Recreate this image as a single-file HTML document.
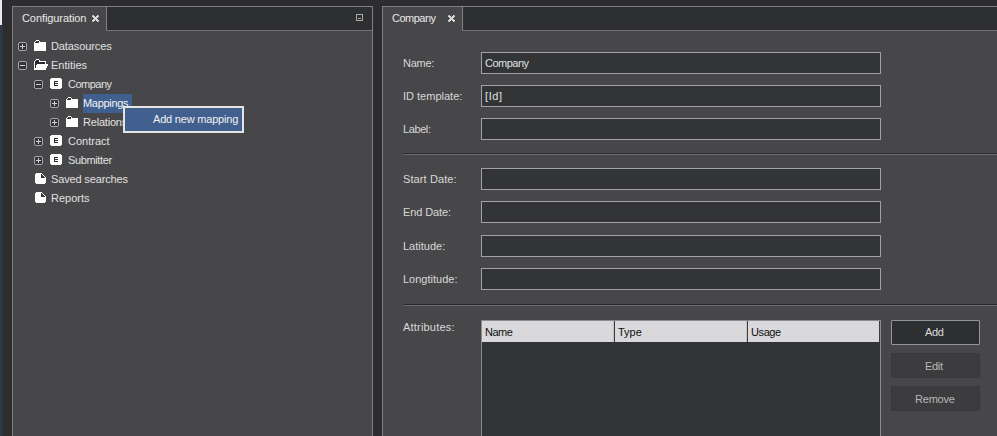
<!DOCTYPE html>
<html><head><meta charset="utf-8">
<style>
*{margin:0;padding:0;box-sizing:border-box}
html,body{width:997px;height:436px;overflow:hidden;background:#2d2d2f}
body{position:relative;font-family:"Liberation Sans",sans-serif;font-size:11px}
.a{position:absolute}
.t{position:absolute;line-height:13px;white-space:nowrap}
svg{position:absolute;display:block;shape-rendering:crispEdges}
</style></head><body>


<div class="a" style="left:0px;top:0px;width:2px;height:25px;background:#ebebeb;"></div>
<div class="a" style="left:0px;top:25px;width:2px;height:411px;background:#2a3848;"></div>
<div class="a" style="left:2px;top:25px;width:1px;height:411px;background:#363436;"></div>
<div class="a" style="left:12px;top:6px;width:361px;height:440px;background:#474749;border:1px solid #808082"></div>
<div class="a" style="left:13px;top:7px;width:359px;height:23px;background:#2e2f31;"></div>
<div class="a" style="left:13px;top:30px;width:359px;height:1px;background:#727274;"></div>
<div class="a" style="left:13px;top:7px;width:93px;height:24px;background:#474749;"></div>
<div class="a" style="left:106px;top:7px;width:1px;height:23px;background:#828284;"></div>
<div class="t" style="left:22px;top:12px;color:#e8e8e8;letter-spacing:-0.08px;">Configuration</div>
<svg style="left:92px;top:15px" width="7" height="7"><path d="M1 0h1v1h-1zM5 0h1v1h-1zM0 1h3v1h-3zM4 1h3v1h-3zM1 2h5v1h-5zM2 3h3v1h-3zM1 4h5v1h-5zM0 5h3v1h-3zM4 5h3v1h-3zM1 6h1v1h-1zM5 6h1v1h-1z" fill="#d8d8d8"/><path d="M0 0h1v1h-1zM6 0h1v1h-1zM0 6h1v1h-1zM6 6h1v1h-1z" fill="#9a9a9c"/></svg>
<svg style="left:356px;top:14px" width="7" height="7" viewBox="0 0 7 7"><rect x="0.5" y="0.5" width="6" height="6" fill="none" stroke="#a8a8a8"/><rect x="2" y="4" width="3" height="1" fill="#a8a8a8"/></svg>
<svg style="left:18px;top:42px" width="9" height="9"><path d="M1 0h7v1h1v7h-1v1H1v-1H0V1h1z" fill="#a6a6a6"/><rect x="1" y="1" width="7" height="7" fill="#353537"/><path d="M2 4h5v1H2zM4 2h1v5H4z" fill="#d0d0d0"/></svg>
<svg style="left:34px;top:40px" width="12" height="11"><path d="M2 0h3v1h-3zM1 1h1v1h-1zM5 1h1v1h-1zM0 2h1v1h-1zM5 2h7v1h-7zM0 3h12v1h-12zM0 4h12v1h-12zM0 5h12v1h-12zM0 6h12v1h-12zM0 7h12v1h-12zM0 8h12v1h-12zM0 9h12v1h-12zM0 10h12v1h-12z" fill="#fff"/><path d="M2 1h3v1h-3zM1 2h4v1h-4z" fill="#343436"/></svg>
<div class="t" style="left:51px;top:40px;color:#e0e0e0;letter-spacing:-0.1px;">Datasources</div>
<svg style="left:18px;top:61px" width="9" height="9"><path d="M1 0h7v1h1v7h-1v1H1v-1H0V1h1z" fill="#a6a6a6"/><rect x="1" y="1" width="7" height="7" fill="#353537"/><path d="M2 4h5v1H2z" fill="#d0d0d0"/></svg>
<svg style="left:34px;top:59px" width="14" height="11"><path d="M2 0h3v1h-3zM1 1h1v1h-1zM5 1h1v1h-1zM0 2h1v1h-1zM5 2h7v1h-7zM0 3h1v1h-1zM11 3h1v1h-1zM0 4h1v1h-1zM11 4h1v1h-1zM0 5h1v1h-1zM3 5h11v1h-11zM0 6h1v1h-1zM2 6h12v1h-12zM0 7h1v1h-1zM2 7h11v1h-11zM0 8h1v1h-1zM2 8h11v1h-11zM0 9h12v1h-12zM0 10h12v1h-12z" fill="#fff"/><path d="M2 1h3v1h-3zM1 2h4v1h-4zM1 3h10v1h-10zM1 4h10v1h-10zM1 5h2v1h-2zM1 6h1v1h-1zM1 7h1v1h-1zM1 8h1v1h-1z" fill="#2c2c2e"/></svg>
<div class="t" style="left:51px;top:59px;color:#e0e0e0;">Entities</div>
<svg style="left:34px;top:80px" width="9" height="9"><path d="M1 0h7v1h1v7h-1v1H1v-1H0V1h1z" fill="#a6a6a6"/><rect x="1" y="1" width="7" height="7" fill="#353537"/><path d="M2 4h5v1H2z" fill="#d0d0d0"/></svg>
<svg style="left:50px;top:78px" width="12" height="11"><path d="M1 0h10v1h-10zM0 1h12v1h-12zM0 2h12v1h-12zM0 3h4v1h-4zM8 3h4v1h-4zM0 4h4v1h-4zM5 4h7v1h-7zM0 5h4v1h-4zM8 5h4v1h-4zM0 6h4v1h-4zM5 6h7v1h-7zM0 7h4v1h-4zM8 7h4v1h-4zM0 8h12v1h-12zM0 9h12v1h-12zM1 10h10v1h-10z" fill="#fff"/><path d="M4 3h4v1h-4zM4 4h1v1h-1zM4 5h4v1h-4zM4 6h1v1h-1zM4 7h4v1h-4z" fill="#2e2e30"/></svg>
<div class="t" style="left:68px;top:78px;color:#e0e0e0;letter-spacing:-0.5px;">Company</div>
<div class="a" style="left:83px;top:94px;width:49px;height:19px;background:#3f5f8e;"></div>
<svg style="left:50px;top:99px" width="9" height="9"><path d="M1 0h7v1h1v7h-1v1H1v-1H0V1h1z" fill="#a6a6a6"/><rect x="1" y="1" width="7" height="7" fill="#353537"/><path d="M2 4h5v1H2zM4 2h1v5H4z" fill="#d0d0d0"/></svg>
<svg style="left:66px;top:97px" width="12" height="11"><path d="M2 0h3v1h-3zM1 1h1v1h-1zM5 1h1v1h-1zM0 2h1v1h-1zM5 2h7v1h-7zM0 3h12v1h-12zM0 4h12v1h-12zM0 5h12v1h-12zM0 6h12v1h-12zM0 7h12v1h-12zM0 8h12v1h-12zM0 9h12v1h-12zM0 10h12v1h-12z" fill="#fff"/><path d="M2 1h3v1h-3zM1 2h4v1h-4z" fill="#343436"/></svg>
<div class="t" style="left:83px;top:97px;color:#f4f4f4;letter-spacing:-0.3px;">Mappings</div>
<svg style="left:50px;top:118px" width="9" height="9"><path d="M1 0h7v1h1v7h-1v1H1v-1H0V1h1z" fill="#a6a6a6"/><rect x="1" y="1" width="7" height="7" fill="#353537"/><path d="M2 4h5v1H2zM4 2h1v5H4z" fill="#d0d0d0"/></svg>
<svg style="left:66px;top:116px" width="12" height="11"><path d="M2 0h3v1h-3zM1 1h1v1h-1zM5 1h1v1h-1zM0 2h1v1h-1zM5 2h7v1h-7zM0 3h12v1h-12zM0 4h12v1h-12zM0 5h12v1h-12zM0 6h12v1h-12zM0 7h12v1h-12zM0 8h12v1h-12zM0 9h12v1h-12zM0 10h12v1h-12z" fill="#fff"/><path d="M2 1h3v1h-3zM1 2h4v1h-4z" fill="#343436"/></svg>
<div class="t" style="left:83px;top:116px;color:#e0e0e0;letter-spacing:-0.2px;">Relations</div>
<svg style="left:34px;top:137px" width="9" height="9"><path d="M1 0h7v1h1v7h-1v1H1v-1H0V1h1z" fill="#a6a6a6"/><rect x="1" y="1" width="7" height="7" fill="#353537"/><path d="M2 4h5v1H2zM4 2h1v5H4z" fill="#d0d0d0"/></svg>
<svg style="left:50px;top:135px" width="12" height="11"><path d="M1 0h10v1h-10zM0 1h12v1h-12zM0 2h12v1h-12zM0 3h4v1h-4zM8 3h4v1h-4zM0 4h4v1h-4zM5 4h7v1h-7zM0 5h4v1h-4zM8 5h4v1h-4zM0 6h4v1h-4zM5 6h7v1h-7zM0 7h4v1h-4zM8 7h4v1h-4zM0 8h12v1h-12zM0 9h12v1h-12zM1 10h10v1h-10z" fill="#fff"/><path d="M4 3h4v1h-4zM4 4h1v1h-1zM4 5h4v1h-4zM4 6h1v1h-1zM4 7h4v1h-4z" fill="#2e2e30"/></svg>
<div class="t" style="left:68px;top:135px;color:#e0e0e0;">Contract</div>
<svg style="left:34px;top:156px" width="9" height="9"><path d="M1 0h7v1h1v7h-1v1H1v-1H0V1h1z" fill="#a6a6a6"/><rect x="1" y="1" width="7" height="7" fill="#353537"/><path d="M2 4h5v1H2zM4 2h1v5H4z" fill="#d0d0d0"/></svg>
<svg style="left:50px;top:154px" width="12" height="11"><path d="M1 0h10v1h-10zM0 1h12v1h-12zM0 2h12v1h-12zM0 3h4v1h-4zM8 3h4v1h-4zM0 4h4v1h-4zM5 4h7v1h-7zM0 5h4v1h-4zM8 5h4v1h-4zM0 6h4v1h-4zM5 6h7v1h-7zM0 7h4v1h-4zM8 7h4v1h-4zM0 8h12v1h-12zM0 9h12v1h-12zM1 10h10v1h-10z" fill="#fff"/><path d="M4 3h4v1h-4zM4 4h1v1h-1zM4 5h4v1h-4zM4 6h1v1h-1zM4 7h4v1h-4z" fill="#2e2e30"/></svg>
<div class="t" style="left:68px;top:154px;color:#e0e0e0;letter-spacing:-0.37px;">Submitter</div>
<svg style="left:35px;top:173px" width="11" height="11"><path d="M1 0h6v1h-6zM0 1h6v1h-6zM7 1h1v1h-1zM0 2h6v1h-6zM8 2h1v1h-1zM0 3h6v1h-6zM9 3h1v1h-1zM0 4h6v1h-6zM10 4h1v1h-1zM0 5h11v1h-11zM0 6h11v1h-11zM0 7h11v1h-11zM0 8h11v1h-11zM0 9h11v1h-11zM1 10h9v1h-9z" fill="#fff"/><path d="M6 1h1v1h-1zM6 2h2v1h-2zM6 3h3v1h-3zM6 4h4v1h-4z" fill="#343436"/></svg>
<div class="t" style="left:51px;top:173px;color:#e0e0e0;letter-spacing:-0.15px;">Saved searches</div>
<svg style="left:35px;top:192px" width="11" height="11"><path d="M1 0h6v1h-6zM0 1h6v1h-6zM7 1h1v1h-1zM0 2h6v1h-6zM8 2h1v1h-1zM0 3h6v1h-6zM9 3h1v1h-1zM0 4h6v1h-6zM10 4h1v1h-1zM0 5h11v1h-11zM0 6h11v1h-11zM0 7h11v1h-11zM0 8h11v1h-11zM0 9h11v1h-11zM1 10h9v1h-9z" fill="#fff"/><path d="M6 1h1v1h-1zM6 2h2v1h-2zM6 3h3v1h-3zM6 4h4v1h-4z" fill="#343436"/></svg>
<div class="t" style="left:51px;top:192px;color:#e0e0e0;">Reports</div>
<div class="a" style="left:123px;top:106px;width:121px;height:27px;background:#41608f;border:2px solid #e4e4e4"></div>
<div class="t" style="left:153px;top:113px;color:#f0f0f0;letter-spacing:-0.2px;">Add new mapping</div>
<div class="a" style="left:382px;top:6px;width:640px;height:440px;background:#474749;border:1px solid #808082"></div>
<div class="a" style="left:383px;top:7px;width:620px;height:23px;background:#2e2f31;"></div>
<div class="a" style="left:383px;top:30px;width:620px;height:1px;background:#727274;"></div>
<div class="a" style="left:383px;top:7px;width:79px;height:24px;background:#474749;"></div>
<div class="a" style="left:462px;top:7px;width:1px;height:23px;background:#828284;"></div>
<div class="t" style="left:392px;top:12px;color:#e8e8e8;letter-spacing:-0.5px;">Company</div>
<svg style="left:448px;top:15px" width="7" height="7"><path d="M1 0h1v1h-1zM5 0h1v1h-1zM0 1h3v1h-3zM4 1h3v1h-3zM1 2h5v1h-5zM2 3h3v1h-3zM1 4h5v1h-5zM0 5h3v1h-3zM4 5h3v1h-3zM1 6h1v1h-1zM5 6h1v1h-1z" fill="#d8d8d8"/><path d="M0 0h1v1h-1zM6 0h1v1h-1zM0 6h1v1h-1zM6 6h1v1h-1z" fill="#9a9a9c"/></svg>
<div class="t" style="left:403px;top:57px;color:#d8d8d8;letter-spacing:-0.25px;">Name:</div>
<div class="a" style="left:481px;top:52px;width:400px;height:22px;background:#333436;border:1px solid #a2a2a4"></div>
<div class="t" style="left:485px;top:57px;color:#e0e0e0;letter-spacing:-0.5px;">Company</div>
<div class="t" style="left:403px;top:90px;color:#d8d8d8;">ID template:</div>
<div class="a" style="left:481px;top:85px;width:400px;height:22px;background:#333436;border:1px solid #a2a2a4"></div>
<div class="t" style="left:485px;top:90px;color:#e0e0e0;letter-spacing:0.6px;">[Id]</div>
<div class="t" style="left:403px;top:123px;color:#d8d8d8;letter-spacing:-0.4px;">Label:</div>
<div class="a" style="left:481px;top:118px;width:400px;height:22px;background:#333436;border:1px solid #a2a2a4"></div>
<div class="t" style="left:403px;top:173px;color:#d8d8d8;letter-spacing:0.1px;">Start Date:</div>
<div class="a" style="left:481px;top:168px;width:400px;height:22px;background:#333436;border:1px solid #a2a2a4"></div>
<div class="t" style="left:403px;top:206px;color:#d8d8d8;letter-spacing:-0.12px;">End Date:</div>
<div class="a" style="left:481px;top:201px;width:400px;height:22px;background:#333436;border:1px solid #a2a2a4"></div>
<div class="t" style="left:403px;top:240px;color:#d8d8d8;">Latitude:</div>
<div class="a" style="left:481px;top:235px;width:400px;height:22px;background:#333436;border:1px solid #a2a2a4"></div>
<div class="t" style="left:403px;top:273px;color:#d8d8d8;">Longtitude:</div>
<div class="a" style="left:481px;top:268px;width:400px;height:22px;background:#333436;border:1px solid #a2a2a4"></div>
<div class="a" style="left:403px;top:153px;width:600px;height:1px;background:#2b2b2d;"></div>
<div class="a" style="left:403px;top:154px;width:600px;height:1px;background:#6c6c6e;"></div>
<div class="a" style="left:403px;top:304px;width:600px;height:1px;background:#2b2b2d;"></div>
<div class="a" style="left:403px;top:305px;width:600px;height:1px;background:#6c6c6e;"></div>
<div class="t" style="left:403px;top:321px;color:#d8d8d8;letter-spacing:0.2px;">Attributes:</div>
<div class="a" style="left:481px;top:320px;width:400px;height:130px;background:#333436;border:1px solid #8c8c8e"></div>
<div class="a" style="left:482px;top:321px;width:397px;height:21px;background:#d9d9db;"></div>
<div class="a" style="left:879px;top:321px;width:1px;height:21px;background:#3c3c3e;"></div>
<div class="a" style="left:613px;top:321px;width:1px;height:21px;background:#c4c4c6;"></div>
<div class="a" style="left:614px;top:321px;width:1px;height:21px;background:#3a3a3c;"></div>
<div class="a" style="left:746px;top:321px;width:1px;height:21px;background:#c4c4c6;"></div>
<div class="a" style="left:747px;top:321px;width:1px;height:21px;background:#3a3a3c;"></div>
<div class="t" style="left:485px;top:326px;color:#101010;letter-spacing:-0.5px;">Name</div>
<div class="t" style="left:618px;top:326px;color:#101010;">Type</div>
<div class="t" style="left:751px;top:326px;color:#101010;letter-spacing:-0.4px;">Usage</div>
<div class="a" style="left:891px;top:320px;width:89px;height:25px;background:#2e2f31;border:1px solid #959597;border-radius:1px"></div>
<div class="t" style="left:925px;top:326px;color:#dcdcdc;letter-spacing:-0.4px;">Add</div>
<div class="a" style="left:891px;top:353px;width:89px;height:25px;background:#3c3c3e;border:1px solid #39393b;border-radius:1px"></div>
<div class="t" style="left:925px;top:360px;color:#b8b8b8;letter-spacing:-0.3px;">Edit</div>
<div class="a" style="left:891px;top:386px;width:89px;height:25px;background:#3c3c3e;border:1px solid #39393b;border-radius:1px"></div>
<div class="t" style="left:915px;top:393px;color:#b8b8b8;letter-spacing:-0.2px;">Remove</div>
</body></html>
